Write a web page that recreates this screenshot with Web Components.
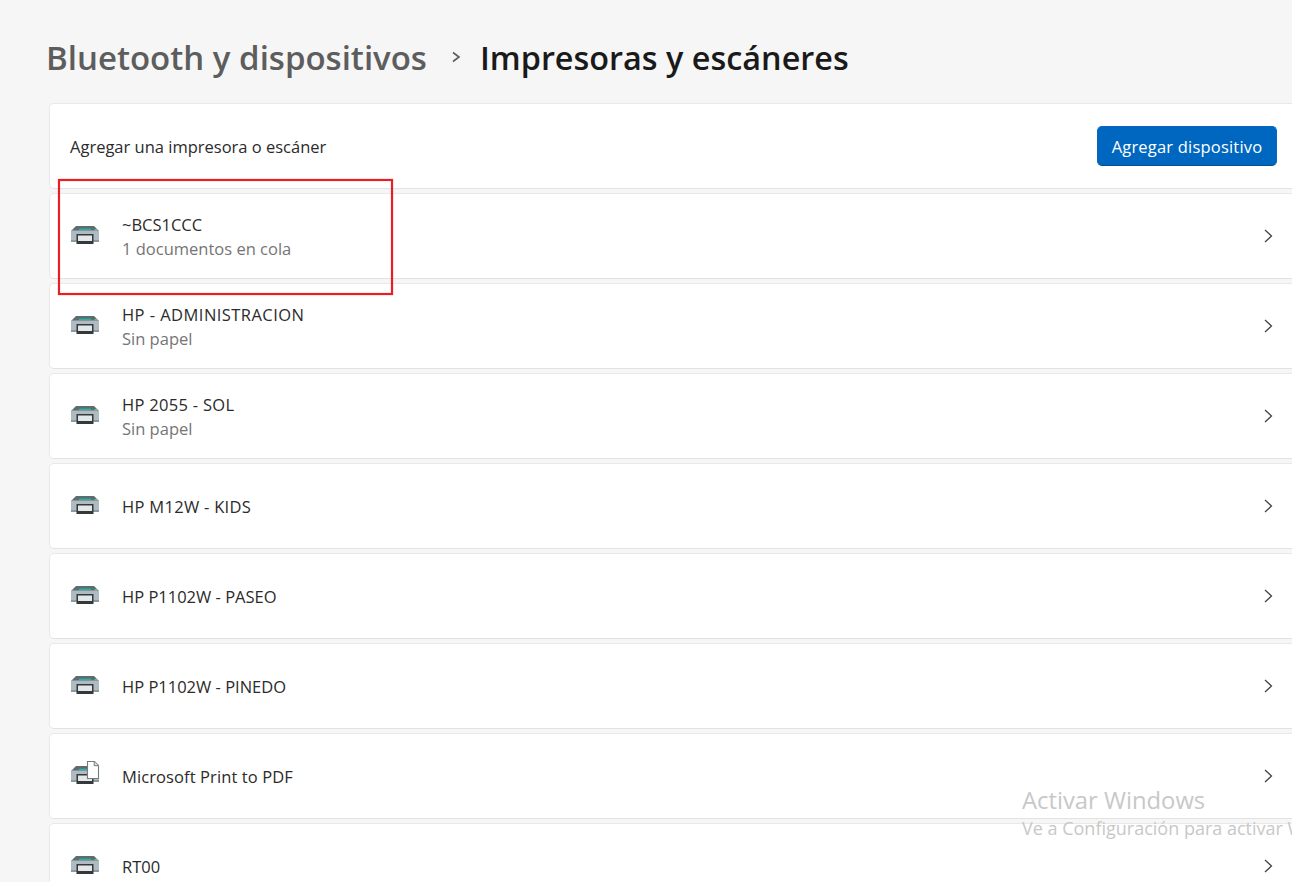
<!DOCTYPE html>
<html lang="es">
<head>
<meta charset="utf-8">
<title>Impresoras y escáneres</title>
<style>
	html, body { margin: 0; height: 882px; overflow: hidden; background: #f6f6f6; }
	body { font-family: "Open Sans", "Noto Sans", sans-serif; color: #1b1b1b; }
</style>
</head>
<body>
<settings-page>
	<page-title parent="Bluetooth y dispositivos" current="Impresoras y escáneres"></page-title>
	<add-card label="Agregar una impresora o escáner" action="Agregar dispositivo"></add-card>
	<printer-row name="~BCS1CCC" status="1 documentos en cola"></printer-row>
	<printer-row name="HP - ADMINISTRACION" status="Sin papel" style="--name-track: .45px"></printer-row>
	<printer-row name="HP 2055 - SOL" status="Sin papel" style="--name-track: .3px"></printer-row>
	<printer-row name="HP M12W - KIDS" style="--name-track: .3px"></printer-row>
	<printer-row name="HP P1102W - PASEO"></printer-row>
	<printer-row name="HP P1102W - PINEDO"></printer-row>
	<printer-row name="Microsoft Print to PDF" pdf style="--name-track: .1px"></printer-row>
	<printer-row name="RT00"></printer-row>
	<red-mark></red-mark>
	<activate-mark></activate-mark>
</settings-page>

<script>
class SettingsPage extends HTMLElement {
	constructor() {
		super()
		this.attachShadow( { mode: 'open' } )
		this.shadowRoot.innerHTML = `
			<style>
				:host {
					display: flex;
					flex-direction: column;
					gap: 4px;
					position: relative;
					box-sizing: border-box;
					width: 1309px;
					height: 882px;
					padding-left: 49px;
					overflow: hidden;
				}
			</style>
			<slot></slot>
		`
	}
}

class PageTitle extends HTMLElement {
	constructor() {
		super()
		this.attachShadow( { mode: 'open' } )
	}

	connectedCallback() {
		this.shadowRoot.innerHTML = `
			<style>
				:host {
					display: flex;
					flex: none;
					align-items: center;
					height: 103px;
					margin-bottom: -4px;
					margin-left: -3px;
					box-sizing: border-box;
					padding-top: 11px;
					font-size: 33px;
					font-weight: 600;
					white-space: nowrap;
				}
				.parent { color: #5d5d5d; }
				.current { color: #1a1a1a; font-size: 32.4px; }
				svg { flex: none; margin: 0 19px 0 24px; color: #5d5d5d; }
			</style>
			<span class="parent">${this.getAttribute('parent')}</span>
			<svg width="10" height="14" viewBox="0 0 10 14" fill="none">
				<path d="M2 2.5L8 7L2 11.5" stroke="currentColor" stroke-width="1.6"/>
			</svg>
			<span class="current">${this.getAttribute('current')}</span>
		`
	}
}

const cardStyles = `
	:host {
		display: flex;
		flex: none;
		align-items: center;
		box-sizing: border-box;
		height: 86px;
		padding: 0 31px 0 21px;
		background: #fff;
		border: 1px solid #e9e9e9;
		border-bottom-color: #e2e2e2;
		border-radius: 5px;
		font-size: 16.5px;
		color: #2b2b2b;
	}
`

class AddCard extends HTMLElement {
	constructor() {
		super()
		this.attachShadow( { mode: 'open' } )
	}

	connectedCallback() {
		this.shadowRoot.innerHTML = `
			<style>
				${cardStyles}
				span { flex: 1; margin-left: -1px; }
				button {
					box-sizing: border-box;
					width: 180px;
					height: 40px;
					padding: 0;
					border: 1px solid #0a68bd;
					border-bottom-color: #074f92;
					border-radius: 5px;
					background: #0067c0;
					color: #fff;
					font: 16.5px "Open Sans", "Noto Sans", sans-serif;
					letter-spacing: .2px;
				}
			</style>
			<span>${this.getAttribute('label')}</span>
			<button>${this.getAttribute('action')}</button>
		`
	}
}

class PrinterRow extends HTMLElement {
	constructor() {
		super()
		this.attachShadow( { mode: 'open' } )
	}

	connectedCallback() {
		const status = this.getAttribute('status')
		const sheet = this.hasAttribute('pdf') ? `
			<path d="M16.5 -4.5H23.5L27.5 -0.5V12.5H16.5Z" fill="#fff" stroke="#777b7e" stroke-width="1.1"/>
			<path d="M23.2 -4.5V-0.3H27.5" fill="#dcdee0" stroke="#777b7e" stroke-width="1"/>
		` : ''
		this.shadowRoot.innerHTML = `
			<style>
				${cardStyles}
				svg.printer { flex: none; margin: 0 22px 2px 0; overflow: visible; }
				.text { flex: 1; display: flex; flex-direction: column; gap: 3px; margin-top: 1px; }
				.name { line-height: 21px; letter-spacing: var(--name-track, 0); }
				.status { line-height: 21px; color: #757575; }
				svg.chevron { flex: none; margin-right: 4px; color: #444; }
			</style>
			<svg class="printer" width="29" height="18" viewBox="0 0 29 18">
				<path d="M5 0H23L28 5H0Z" fill="#5f6b6d"/>
				<rect x="8" y="2.6" width="12" height="1.4" fill="#27b3a6"/>
				<rect x="23.5" y="3" width="2.5" height="1.2" fill="#54d277"/>
				<path d="M1 4.5H27A1 1 0 0 1 28 5.5V16H0V5.5A1 1 0 0 1 1 4.5Z" fill="#aebbc3"/>
				<rect x="0" y="14" width="28" height="2" fill="#8b99a1"/>
				<rect x="5.5" y="8" width="17" height="10" fill="#34393c"/>
				<rect x="7" y="9.5" width="14" height="5.5" fill="#e4e7e8"/>
				${sheet}
			</svg>
			<div class="text">
				<div class="name">${this.getAttribute('name')}</div>
				${status ? `<div class="status">${status}</div>` : ''}
			</div>
			<svg class="chevron" width="9" height="14" viewBox="0 0 9 14" fill="none">
				<path d="M1 1L7.5 7L1 13" stroke="currentColor" stroke-width="1.3"/>
			</svg>
		`
	}
}

// the hand drawn box from the original screenshot, lies over the rows
class RedMark extends HTMLElement {
	constructor() {
		super()
		this.attachShadow( { mode: 'open' } )
		this.shadowRoot.innerHTML = `
			<style>
				:host {
					position: absolute;
					left: 58px;
					top: 179px;
					width: 335px;
					height: 116px;
					box-sizing: border-box;
					border: 2px solid #ea1c24;
					box-shadow: 0 0 1px rgba(234, 28, 36, .7), inset 0 0 1px rgba(234, 28, 36, .7);
				}
			</style>
		`
	}
}

class ActivateMark extends HTMLElement {
	constructor() {
		super()
		this.attachShadow( { mode: 'open' } )
		this.shadowRoot.innerHTML = `
			<style>
				:host {
					position: absolute;
					left: 1022px;
					top: 785px;
					width: 270px;
					overflow: hidden;
					white-space: nowrap;
					color: #c8c8c8;
					pointer-events: none;
				}
				.big { font-size: 23.8px; line-height: 30px; }
				.small { font-size: 18px; line-height: 24px; margin-top: 1px; }
			</style>
			<div class="big">Activar Windows</div>
			<div class="small">Ve a Configuración para activar Windows.</div>
		`
	}
}

customElements.define( 'settings-page', SettingsPage )
customElements.define( 'page-title', PageTitle )
customElements.define( 'add-card', AddCard )
customElements.define( 'printer-row', PrinterRow )
customElements.define( 'red-mark', RedMark )
customElements.define( 'activate-mark', ActivateMark )
</script>
</body>
</html>
